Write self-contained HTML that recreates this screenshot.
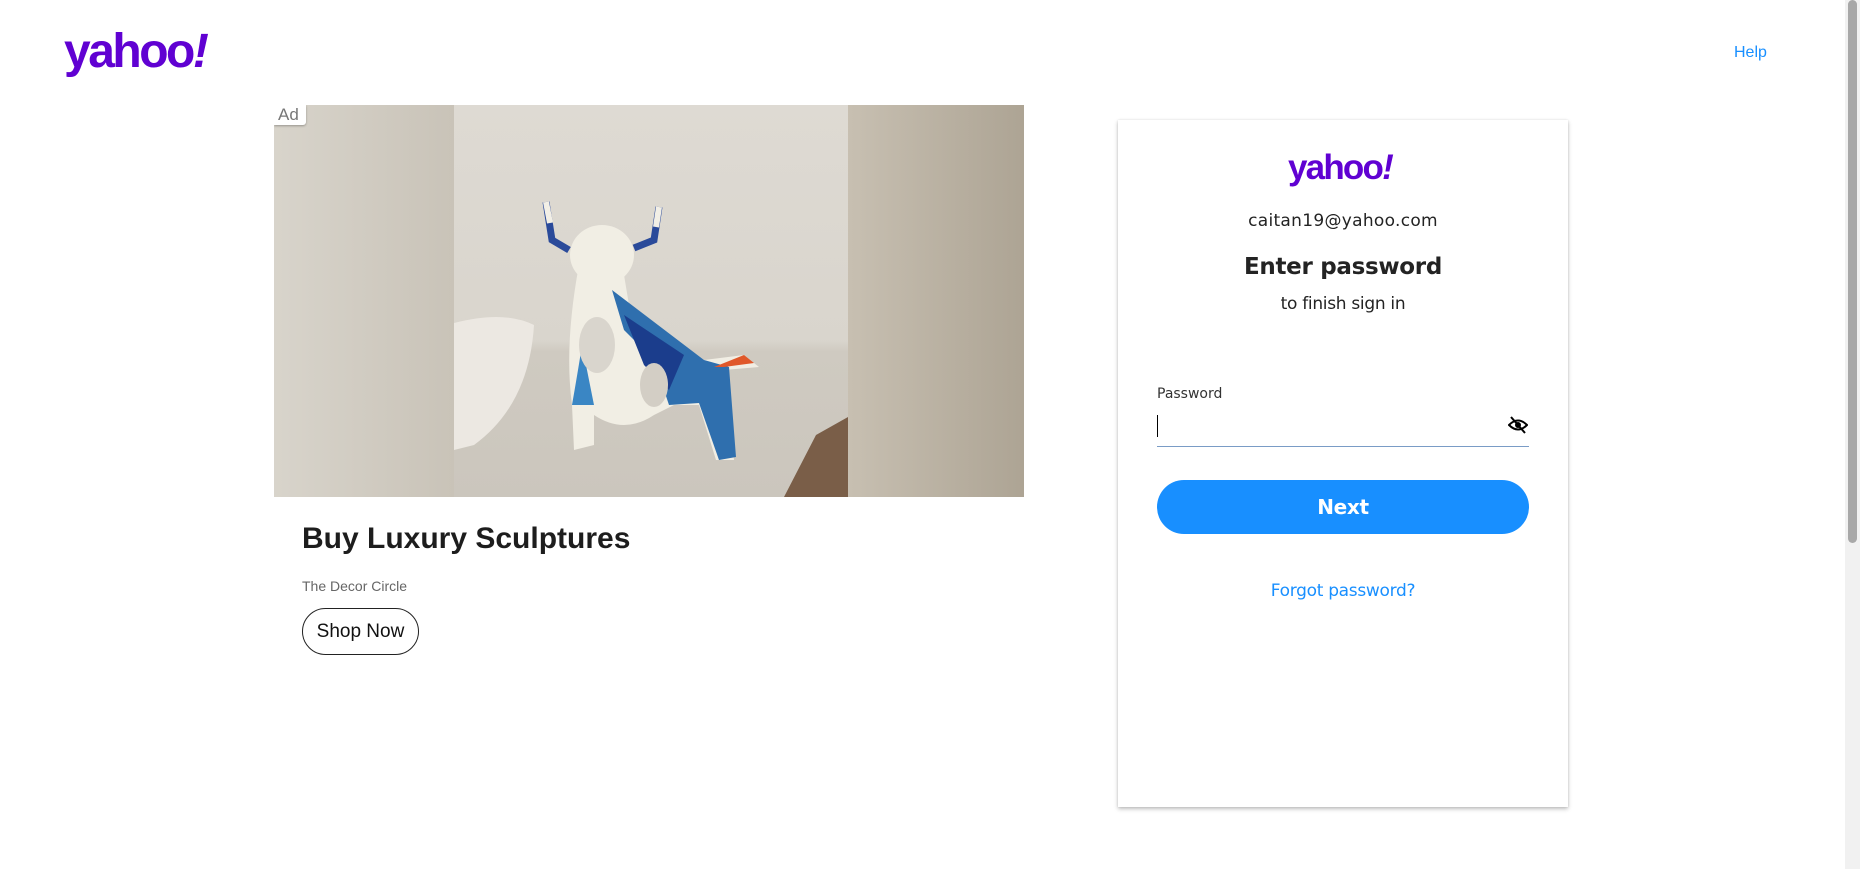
<!DOCTYPE html>
<html><head><meta charset="utf-8"><style>
*{margin:0;padding:0;box-sizing:border-box}
body{width:1860px;height:869px;overflow:hidden;background:#fff;font-family:"Liberation Sans",sans-serif;position:relative}
.logo{position:absolute;font-weight:bold;color:#6001d2;letter-spacing:-2.5px;font-family:"Liberation Sans",sans-serif}
.abs{position:absolute}
.dv{font-family:'DejaVu Sans',sans-serif}
</style></head><body>
<div class="logo" style="left:64px;top:24px;font-size:48px;">yahoo<i>!</i></div>
<div class="abs" style="left:1734px;top:44px;font-size:16px;color:#188fff">Help</div>
<div class="abs" style="right:0;top:0;width:15px;height:869px;background:#f1f1f1"></div>
<div class="abs" style="right:3px;top:0;width:9px;height:543px;background:#a8a8a8;border-radius:5px"></div>

<div class="abs" style="left:274px;top:105px;width:750px;height:392px;background:linear-gradient(90deg,#d8d4cb,#c9c3b8 24%,#d4d0c8 24%,#ddd9d1 50%,#d2ccc2 76%,#c8c0b2 76%,#ada494);overflow:hidden">
 <div class="abs" style="left:180px;top:0;width:394px;height:392px;background:linear-gradient(180deg,#dedad3 0%,#d9d5cd 60%,#cfcac1 63%,#cbc6bd 100%)">
  <svg width="394" height="392" viewBox="0 0 394 392" style="position:absolute;left:0;top:0">
   <path d="M0 218 Q50 205 80 220 Q75 300 20 340 L0 345Z" fill="#ece8e2"/>
   <path d="M92 97 L98 135 L115 145 M205 102 L200 135 L180 143" stroke="#2a4a9a" stroke-width="7" fill="none"/>
   <path d="M92 97 L96 118 M205 102 L202 122" stroke="#f2efe6" stroke-width="6" fill="none"/>
   <ellipse cx="148" cy="150" rx="32" ry="30" fill="#f1eee4"/>
   <path d="M125 160 L170 170 L175 200 L250 255 L290 250 L305 262 L270 265 L280 355 L262 355 L245 300 L220 300 L200 310 Q170 330 140 310 L140 340 L120 345 L118 300 Q110 240 125 160Z" fill="#f1eee4"/>
   <path d="M158 185 L250 255 L275 262 L282 352 L265 355 L245 298 L215 300 L200 255 L170 225Z" fill="#2f6fae"/>
   <path d="M170 210 L230 250 L215 285 L190 260Z" fill="#1b3d8c"/>
   <path d="M260 262 L290 250 L300 258 L270 262Z" fill="#e0582a"/>
   <path d="M118 300 Q125 260 128 240 L140 300Z" fill="#3a86c4"/>
   <ellipse cx="143" cy="240" rx="18" ry="28" fill="#d9d5cd"/>
   <ellipse cx="200" cy="280" rx="14" ry="22" fill="#d3cec5"/>
   <path d="M362 330 L394 312 L394 392 L330 392Z" fill="#7a5e48"/>
  </svg>
 </div>
 <div class="abs" style="left:0;top:0;width:32px;height:20px;background:#fff;border-radius:0 0 3px 0;box-shadow:0 1px 2px rgba(0,0,0,.3);font-size:17px;color:#777;padding-left:4px;line-height:20px">Ad</div>
</div>
<div class="abs" style="left:302px;top:522px;font-size:30px;font-weight:bold;color:#1d1d1d">Buy Luxury Sculptures</div>
<div class="abs" style="left:302px;top:578px;font-size:14px;color:#666">The Decor Circle</div>
<div class="abs" style="left:302px;top:608px;width:117px;height:47px;border:1px solid #222;border-radius:24px;font-size:19px;line-height:45px;text-align:center;color:#111">Shop Now</div>

<div class="abs" style="left:1118px;top:120px;width:450px;height:687px;background:#fff;box-shadow:0 2px 4px rgba(0,0,0,.25),0 0 2px rgba(0,0,0,.1)"></div>
<div class="logo" style="left:1288px;top:148px;font-size:35px;letter-spacing:-1.8px">yahoo<i>!</i></div>
<div class="abs dv" style="left:1118px;width:450px;top:211px;text-align:center;font-size:17px;color:#232323;letter-spacing:.3px">caitan19@yahoo.com</div>
<div class="abs dv" style="left:1118px;width:450px;top:254px;text-align:center;font-size:23px;font-weight:bold;color:#232323;letter-spacing:-.3px">Enter password</div>
<div class="abs dv" style="left:1118px;width:450px;top:294px;text-align:center;font-size:17px;color:#232323;letter-spacing:-.3px">to finish sign in</div>
<div class="abs dv" style="left:1157px;top:386px;font-size:14px;color:#333">Password</div>
<div class="abs" style="left:1157px;top:415px;width:1px;height:22px;background:#000"></div>
<div class="abs" style="left:1157px;top:446px;width:372px;height:1px;background:#7a9cc6"></div>
<svg class="abs" style="left:1508px;top:416px" width="20" height="18" viewBox="0 0 20 18"><path d="M1 9 Q10 0 19 9 Q10 18 1 9Z" fill="none" stroke="#000" stroke-width="2"/><circle cx="10" cy="9" r="3" fill="#000"/><path d="M3 1 L17 17" stroke="#000" stroke-width="2"/></svg>
<div class="abs dv" style="left:1157px;top:480px;width:372px;height:54px;background:#188fff;border-radius:27px;color:#fff;font-size:20px;font-weight:bold;text-align:center;line-height:54px;letter-spacing:-.3px">Next</div>
<div class="abs dv" style="left:1118px;width:450px;top:581px;text-align:center;font-size:17px;color:#188fff;letter-spacing:-.3px">Forgot password?</div>
</body></html>
